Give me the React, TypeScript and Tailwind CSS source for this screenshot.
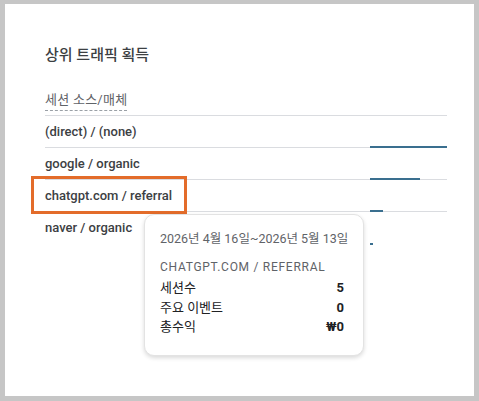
const rows = [
  { label: '(direct) / (none)', bar: 77 },
  { label: 'google / organic', bar: 50 },
  { label: 'chatgpt.com / referral', bar: 13 },
  { label: 'naver / organic', bar: 3 },
]

const stats = [
  { name: '세션수', value: '5' },
  { name: '주요 이벤트', value: '0' },
  { name: '총수익', value: '₩0' },
]

export default function App() {
  return (
    <div
      className="w-[479px] h-[401px] bg-[#c6c6c6] pt-[4px] pl-[5px] pr-[5px] pb-[5px]"
      style={{ fontFamily: 'Roboto, "Noto Sans CJK KR", sans-serif' }}
    >
      <div className="relative h-full bg-white pl-[40px] pr-[27px] pt-[41px]">
        <h2 className="text-[15px] leading-[20px] font-medium text-[#3c4043]">상위 트래픽 획득</h2>

        {/* column header */}
        <div className="mt-[22px] pb-[4px] border-b border-[#dadce0]">
          <span className="inline-block text-[13px] leading-[18px] tracking-[0.02em] text-[#5f6368] border-b border-dashed border-[#9aa0a6] pb-[1px]">
            세션 소스/매체
          </span>
        </div>

        {rows.map((r, i) => (
          <div
            key={r.label}
            className={`flex h-[32px] ${i < rows.length - 1 ? 'border-b border-[#dadce0]' : ''}`}
          >
            <div className="flex-1 flex items-center text-[13px] font-medium text-[#3c4043]">{r.label}</div>
            <div className="w-[77px] flex items-end">
              <div className="h-[2px] bg-[#3a6f8f] translate-y-[1px]" style={{ width: r.bar }} />
            </div>
          </div>
        ))}

        {/* highlight annotation */}
        <div className="absolute left-[26px] top-[172px] w-[156px] h-[38px] border-[3px] border-[#e36c2a]" />

        {/* tooltip */}
        <div className="absolute left-[139px] top-[210px] w-[220px] h-[142px] bg-white rounded-[10px] border border-[#e3e3e3] shadow-[0_2px_4px_rgba(0,0,0,0.15)] pl-[15px] pr-[19px] pt-[15px]">
          <div className="whitespace-nowrap text-[12.5px] leading-[18px] text-[#5f6368]">2026년 4월 16일~2026년 5월 13일</div>
          <div className="mt-[11px] text-[12px] leading-[16px] tracking-[0.06em] text-[#5f6368]">CHATGPT.COM / REFERRAL</div>
          <div className="mt-[3px]">
            {stats.map(s => (
              <div key={s.name} className="flex justify-between h-[19.5px] items-center text-[13px] text-[#202124]">
                <span>{s.name}</span>
                <span className="font-bold">{s.value}</span>
              </div>
            ))}
          </div>
        </div>
      </div>
    </div>
  )
}
